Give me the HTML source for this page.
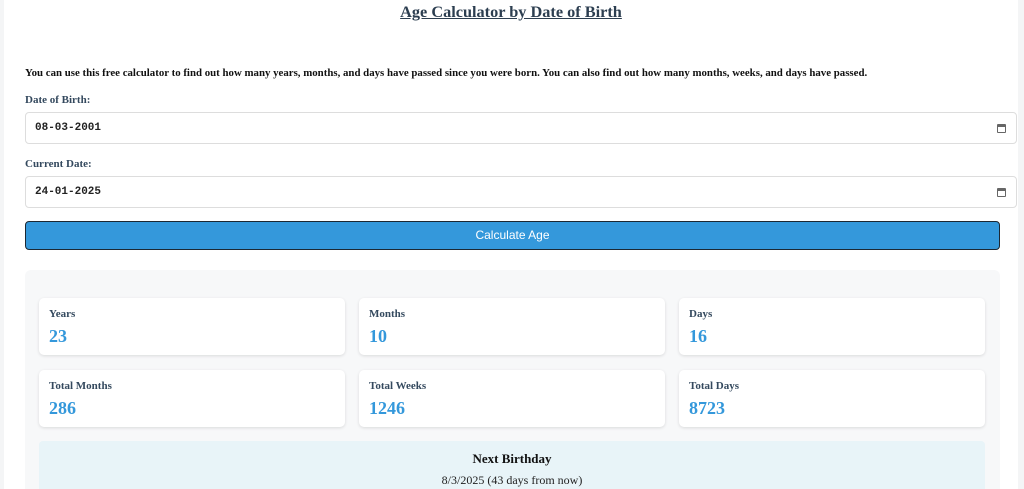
<!DOCTYPE html>
<html><head><style>
html,body{margin:0;width:1024px;height:489px;overflow:hidden}
body{background:#f4f5f6;font-family:"Liberation Serif",serif;position:relative}
.main{position:absolute;left:4px;top:0;width:1014px;height:489px;background:#fff;overflow:hidden}
.abs{position:absolute}
h1{position:absolute;left:0;width:1014px;top:2px;margin:0;text-align:center;font-size:16.3px;color:#2c3e50;text-decoration:underline;font-weight:bold}
.intro{left:21px;top:67px;font-size:10.85px;font-weight:bold;color:#111;white-space:nowrap}
.lbl{left:21px;font-size:11px;font-weight:bold;color:#34495e}
.inp{left:21px;width:992px;height:32px;border:1px solid #ddd;border-radius:4px;box-sizing:border-box}
.inp span{position:absolute;left:9px;top:9px;font-family:"Liberation Mono","DejaVu Sans Mono",monospace;font-size:11px;font-weight:bold;color:#222}
.cal{position:absolute;right:10px;top:11px;width:9px;height:9px;border:1px solid #666;border-top-width:3px;border-radius:1px;box-sizing:border-box}
.btn{left:21px;top:221px;width:975px;height:29px;background:#3498db;border:1px solid #1c2833;border-radius:4px;box-sizing:border-box;color:#fff;font-family:"Liberation Sans",sans-serif;font-size:12px;text-align:center;line-height:27px}
.panel{left:21px;top:270px;width:975px;height:230px;background:#f7f8f9;border-radius:6px}
.card{position:absolute;width:306px;height:57px;background:#fff;border-radius:5px;box-shadow:0 1px 3px rgba(0,0,0,.12)}
.card b{position:absolute;left:10px;top:10px;font-size:11px;color:#34495e}
.card i{position:absolute;left:10px;top:28px;font-style:normal;font-weight:bold;font-size:18px;color:#3498db}
.nb{position:absolute;left:14px;top:171px;width:946px;height:60px;background:#e8f4f8;border-radius:4px;text-align:center}
</style></head><body>
<div class="main">
<h1>Age Calculator by Date of Birth</h1>
<div class="abs intro">You can use this free calculator to find out how many years, months, and days have passed since you were born. You can also find out how many months, weeks, and days have passed.</div>
<div class="abs lbl" style="top:94px">Date of Birth:</div>
<div class="abs inp" style="top:112px"><span>08-03-2001</span><div class="cal"></div></div>
<div class="abs lbl" style="top:158px">Current Date:</div>
<div class="abs inp" style="top:176px"><span>24-01-2025</span><div class="cal"></div></div>
<div class="abs btn">Calculate Age</div>
<div class="abs panel">
<div class="card" style="left:14px;top:28px"><b>Years</b><i>23</i></div>
<div class="card" style="left:334px;top:28px"><b>Months</b><i>10</i></div>
<div class="card" style="left:654px;top:28px"><b>Days</b><i>16</i></div>
<div class="card" style="left:14px;top:100px"><b>Total Months</b><i>286</i></div>
<div class="card" style="left:334px;top:100px"><b>Total Weeks</b><i>1246</i></div>
<div class="card" style="left:654px;top:100px"><b>Total Days</b><i>8723</i></div>
<div class="nb"><div style="position:absolute;top:10px;width:100%;font-weight:bold;font-size:13px;color:#111">Next Birthday</div><div style="position:absolute;top:32px;width:100%;font-size:12px;color:#222">8/3/2025 (43 days from now)</div></div>
</div>
</div>
</body></html>
